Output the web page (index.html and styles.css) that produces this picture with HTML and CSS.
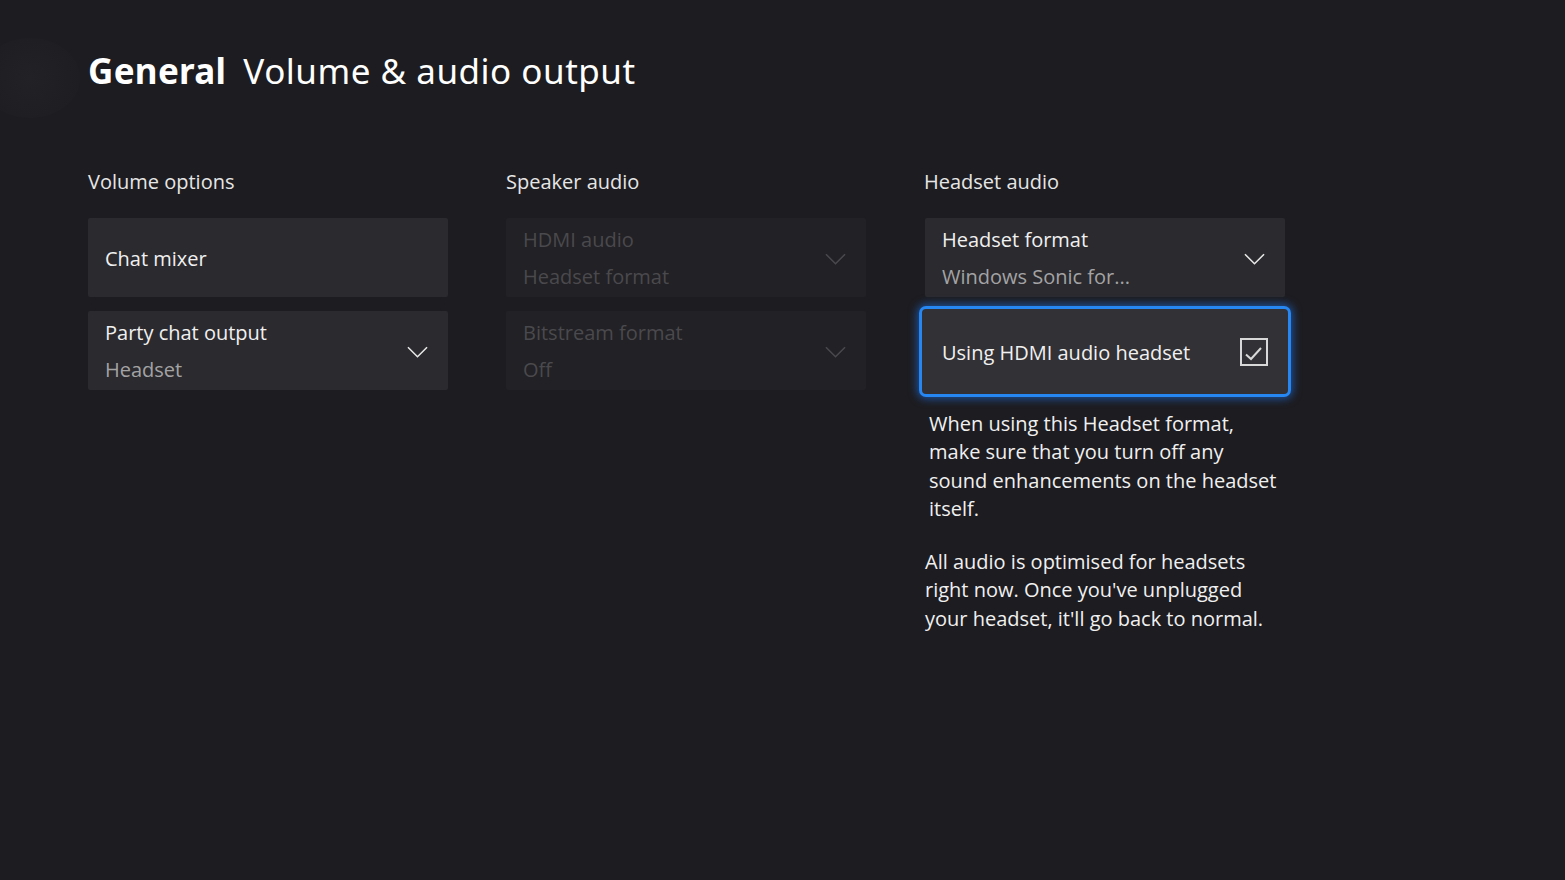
FILE: index.html
```html
<!DOCTYPE html>
<html lang="en">
<head>
<meta charset="utf-8">
<title>General Volume & audio output</title>
<link rel="stylesheet" href="styles.css">
</head>
<body>
<div class="avatar"></div>
<main class="page">
  <h1 class="title"><span class="title-main">General</span><span class="title-sub">Volume &amp; audio output</span></h1>
  <div class="columns">
    <section class="column">
      <h2 class="col-head">Volume options</h2>
      <div class="card single"><div class="card-text"><div class="card-title">Chat mixer</div></div></div>
      <div class="card">
        <div class="card-text"><div class="card-title">Party chat output</div><div class="card-value">Headset</div></div>
        <svg class="chev" viewBox="0 0 22 12"><path d="M1 1 L11 11 L21 1" /></svg>
      </div>
    </section>
    <section class="column">
      <h2 class="col-head">Speaker audio</h2>
      <div class="card disabled">
        <div class="card-text"><div class="card-title">HDMI audio</div><div class="card-value">Headset format</div></div>
        <svg class="chev" viewBox="0 0 22 12"><path d="M1 1 L11 11 L21 1" /></svg>
      </div>
      <div class="card disabled">
        <div class="card-text"><div class="card-title">Bitstream format</div><div class="card-value">Off</div></div>
        <svg class="chev" viewBox="0 0 22 12"><path d="M1 1 L11 11 L21 1" /></svg>
      </div>
    </section>
    <section class="column">
      <h2 class="col-head">Headset audio</h2>
      <div class="card">
        <div class="card-text"><div class="card-title">Headset format</div><div class="card-value">Windows Sonic for...</div></div>
        <svg class="chev" viewBox="0 0 22 12"><path d="M1 1 L11 11 L21 1" /></svg>
      </div>
      <div class="card focused">
        <div class="card-text"><div class="card-title">Using HDMI audio headset</div></div>
        <svg class="check" viewBox="0 0 28 28"><rect x="1" y="1" width="26" height="26" /><path d="M6 16.5 L11 21 L21 10" /></svg>
      </div>
      <p class="desc first">When using this Headset format, make sure that you turn off any sound enhancements on the headset itself.</p>
      <p class="desc">All audio is optimised for headsets right now. Once you've unplugged your headset, it'll go back to normal.</p>
    </section>
  </div>
</main>
</body>
</html>
```
FILE: styles.css
```css
html, body {
  margin: 0;
  padding: 0;
  height: 100%;
}
body {
  background: #1d1c20;
  color: #f2f2f2;
  font-family: "Open Sans", "Noto Sans", sans-serif;
  overflow: hidden;
  position: relative;
}
.avatar {
  position: absolute;
  left: -20px;
  top: 38px;
  width: 100px;
  height: 80px;
  border-radius: 50%;
  background: radial-gradient(circle, #222125 0%, #1f1e22 60%, rgba(29,28,32,0) 100%);
}
.page {
  position: relative;
  padding: 46px 0 0 88px;
}
.title {
  margin: 0;
  font-family: "Noto Sans", sans-serif;
  font-size: 35px;
  line-height: 50px;
  font-weight: 400;
  color: #ffffff;
  display: flex;
  gap: 17px;
  letter-spacing: 0.5px;
}
.title-main {
  font-weight: 700;
  letter-spacing: 0.3px;
}
.columns {
  display: flex;
  gap: 58px;
  margin-top: 73px;
}
.column {
  width: 360px;
  display: flex;
  flex-direction: column;
}
.column:last-child {
  padding-left: 1px;
}
.col-head {
  margin: 0 0 23px 0;
  font-size: 20px;
  line-height: 26px;
  font-weight: 400;
  color: #e6e6e6;
}
.column:last-child .col-head {
  margin-left: -1px;
}
.card {
  height: 79px;
  background: #2b2a2e;
  border-radius: 2px;
  margin-bottom: 14px;
  display: flex;
  align-items: center;
  justify-content: space-between;
  padding: 0 20px 0 17px;
  box-sizing: border-box;
}
.card-text {
  padding-top: 2px;
}
.card-title {
  font-size: 20px;
  line-height: 26px;
  color: #f0f0f0;
}
.card-value {
  font-size: 20px;
  line-height: 26px;
  color: #a3a3a5;
  margin-top: 11px;
}
.chev {
  width: 21px;
  height: 12px;
  margin-top: 2px;
  fill: none;
  stroke: #e8e8e8;
  stroke-width: 1.6;
}
.disabled {
  background: #222125;
}
.disabled .card-title,
.disabled .card-value {
  color: #4a494d;
}
.disabled .chev {
  stroke: #4a494d;
}
.focused {
  height: 91px;
  margin: -5px -6px 14px -6px;
  background: #323135;
  border: 3px solid #2686f2;
  border-radius: 7px;
  box-shadow: 0 0 9px 2px rgba(30,115,230,0.6);
  padding: 0 20px 0 20px;
}
.check {
  width: 28px;
  height: 28px;
  fill: none;
  stroke: #d8d8d8;
  stroke-width: 2;
}
.desc {
  margin: 0;
  font-size: 20px;
  line-height: 28.3px;
  color: #f0f0f0;
  width: 355px;
}
.desc.first {
  margin: -1px 0 25px 4px;
  width: 351px;
}
```
